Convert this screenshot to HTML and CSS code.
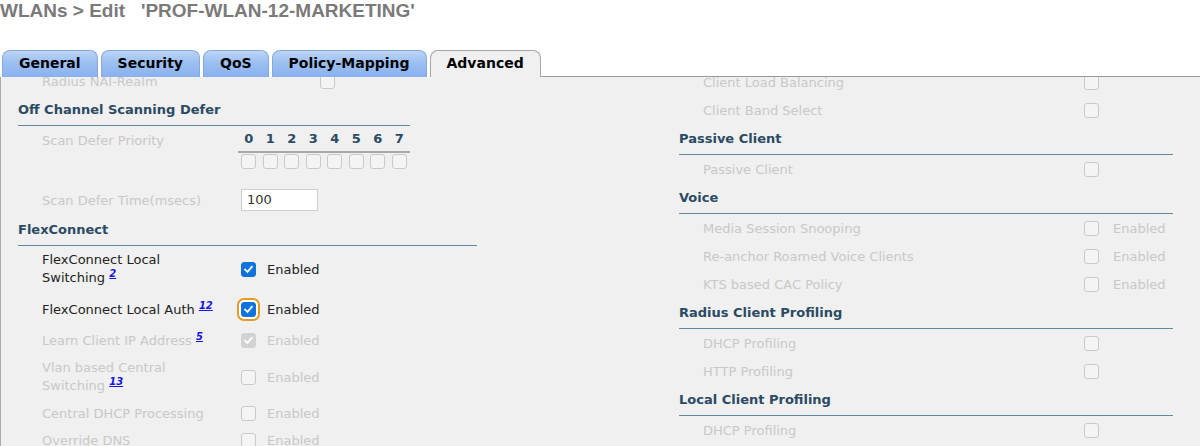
FILE: index.html
```html
<!DOCTYPE html>
<html>
<head>
<meta charset="utf-8">
<title>WLANs Edit</title>
<link rel="stylesheet" href="styles.css">
</head>
<body>
<div class="title">WLANs &gt; Edit &nbsp;&nbsp;'PROF-WLAN-12-MARKETING'</div>
<div class="tabs">
  <div class="tab">General</div>
  <div class="tab">Security</div>
  <div class="tab">QoS</div>
  <div class="tab">Policy-Mapping</div>
  <div class="tab active">Advanced</div>
  <div class="tab-fill"></div>
</div>
<div class="panel">
  <div class="col left">
    <div class="row nai"><span class="lbl dis nai-lbl">Radius NAI-Realm</span><span class="cb"></span></div>
    <div class="sec short">Off Channel Scanning Defer</div>
    <div class="prio">
      <span class="lbl dis prio-lbl">Scan Defer Priority</span>
      <div class="prio-grid">
        <div class="digits"><span>0</span><span>1</span><span>2</span><span>3</span><span>4</span><span>5</span><span>6</span><span>7</span></div>
        <div class="boxes"><span class="cell"><span class="cb"></span></span><span class="cell"><span class="cb"></span></span><span class="cell"><span class="cb"></span></span><span class="cell"><span class="cb"></span></span><span class="cell"><span class="cb"></span></span><span class="cell"><span class="cb"></span></span><span class="cell"><span class="cb"></span></span><span class="cell"><span class="cb"></span></span></div>
      </div>
    </div>
    <div class="row time"><span class="lbl dis">Scan Defer Time(msecs)</span><span class="inp">100</span></div>
    <div class="sec">FlexConnect</div>
    <div class="frow dbl"><span class="flbl">FlexConnect Local Switching <a class="fn">2</a></span><span class="cb on"><svg viewBox="0 0 15 15"><path d="M3.6 7.6 L6.3 10.3 L11.4 4.3"/></svg></span><span class="en">Enabled</span></div>
    <div class="frow la"><span class="flbl">FlexConnect Local Auth <a class="fn">12</a></span><span class="cb on focus"><svg viewBox="0 0 15 15"><path d="M3.6 7.6 L6.3 10.3 L11.4 4.3"/></svg></span><span class="en">Enabled</span></div>
    <div class="frow"><span class="flbl dis">Learn Client IP Address <a class="fn">5</a></span><span class="cb on off"><svg viewBox="0 0 15 15"><path d="M3.6 7.6 L6.3 10.3 L11.4 4.3"/></svg></span><span class="en dis">Enabled</span></div>
    <div class="frow dbl"><span class="flbl dis">Vlan based Central Switching <a class="fn">13</a></span><span class="cb"></span><span class="en dis">Enabled</span></div>
    <div class="frow"><span class="flbl dis">Central DHCP Processing</span><span class="cb"></span><span class="en dis">Enabled</span></div>
    <div class="frow"><span class="flbl dis">Override DNS</span><span class="cb"></span><span class="en dis">Enabled</span></div>
  </div>
  <div class="col right">
    <div class="rrow"><span class="rlbl dis">Client Load Balancing</span><span class="cb"></span></div>
    <div class="rrow"><span class="rlbl dis">Client Band Select</span><span class="cb"></span></div>
    <div class="sec">Passive Client</div>
    <div class="rrow"><span class="rlbl dis">Passive Client</span><span class="cb"></span></div>
    <div class="sec">Voice</div>
    <div class="rrow"><span class="rlbl dis">Media Session Snooping</span><span class="cb"></span><span class="ren dis">Enabled</span></div>
    <div class="rrow"><span class="rlbl dis">Re-anchor Roamed Voice Clients</span><span class="cb"></span><span class="ren dis">Enabled</span></div>
    <div class="rrow"><span class="rlbl dis">KTS based CAC Policy</span><span class="cb"></span><span class="ren dis">Enabled</span></div>
    <div class="sec">Radius Client Profiling</div>
    <div class="rrow"><span class="rlbl dis">DHCP Profiling</span><span class="cb"></span></div>
    <div class="rrow"><span class="rlbl dis">HTTP Profiling</span><span class="cb"></span></div>
    <div class="sec">Local Client Profiling</div>
    <div class="rrow"><span class="rlbl dis">DHCP Profiling</span><span class="cb"></span></div>
  </div>
</div>
</body>
</html>
```

FILE: styles.css
```css
* { box-sizing: border-box; }
html, body { margin: 0; padding: 0; background: #ffffff; }
body {
  width: 1200px;
  height: 446px;
  overflow: hidden;
  font-family: "DejaVu Sans", Verdana, sans-serif;
  font-size: 13px;
  color: #222222;
}

.title {
  font-family: "Liberation Sans", Arial, sans-serif;
  font-weight: bold;
  font-size: 19px;
  line-height: 22px;
  height: 22px;
  color: #7a7a7a;
  white-space: nowrap;
}

.tabs {
  display: flex;
  align-items: stretch;
  margin-top: 28px;
  height: 27px;
  padding-left: 2px;
  gap: 3px;
}
.tab {
  padding: 0 16px;
  font-weight: bold;
  font-size: 14px;
  line-height: 25px;
  color: #000000;
  border: 1px solid #86a9da;
  border-bottom: none;
  border-radius: 8px 8px 0 0;
  background: linear-gradient(#bcd5f7, #9fc1f2 40%, #88b1ee);
}
.tab.active {
  background: #f0f0f0;
  border-color: #a6a6a6;
}
.tab-fill {
  flex: 1;
  margin-left: -3px;
  border-bottom: 1px solid #9a9a9a;
}

.panel {
  display: flex;
  align-items: flex-start;
  height: 369px;
  overflow: hidden;
  background: #f0f0f0;
  border-left: 1px solid #a9a9a9;
  padding-left: 17px;
}
.col.left { width: 459px; margin-top: -10px; }
.col.right { width: 494px; margin-left: 202px; margin-top: -9px; }

.dis { color: #c8c8c8; }

.sec {
  height: 31px;
  padding-top: 7px;
  line-height: 16px;
  font-weight: bold;
  color: #2b4a63;
  border-bottom: 1px solid #5e89a3;
}
.sec.short { width: 392px; }

.row { display: flex; align-items: center; padding-left: 24px; }
.nai { height: 28px; }
.nai-lbl { width: 278px; }

.prio { display: flex; height: 59px; padding-left: 24px; }
.prio-lbl { width: 196px; padding-top: 7px; line-height: 16px; }
.prio-grid { width: 172px; padding-top: 5px; }
.digits {
  display: grid;
  grid-template-columns: repeat(8, 1fr);
  height: 22px;
  line-height: 16px;
  border-bottom: 2px solid #a8a8a8;
  font-weight: bold;
  color: #2b4a63;
  text-align: center;
}
.boxes {
  display: grid;
  grid-template-columns: repeat(8, 1fr);
  margin-top: 1px;
}
.cell { display: flex; justify-content: center; }

.time { height: 30px; }
.time .lbl { width: 199px; }
.inp {
  width: 77px;
  height: 22px;
  background: #ffffff;
  border: 1px solid #cfcfcf;
  padding-left: 5px;
  line-height: 20px;
  color: #333333;
}

.cb {
  display: inline-block;
  flex: none;
  width: 15px;
  height: 15px;
  border: 1px solid #c9c9c9;
  border-radius: 3px;
  background: #f4f4f4;
}
.cb svg { display: block; width: 13px; height: 13px; }
.cb path { fill: none; stroke: #ffffff; stroke-width: 2; stroke-linecap: square; }
.cb.on { background: #0e74dc; border-color: #0e74dc; }
.cb.on.off { background: #d2d2d2; border-color: #d2d2d2; }
.cb.focus { box-shadow: 0 0 0 2px #ffffff, 0 0 0 4px #e59a22; }

.frow { display: flex; align-items: center; height: 27px; padding-left: 24px; }
.frow.dbl { height: 46px; }
.frow.la { height: 35px; }
.flbl { width: 199px; padding-right: 20px; line-height: 18px; }
.fn {
  font-size: 10px;
  font-weight: bold;
  font-style: italic;
  color: #1414e6;
  text-decoration: underline;
  vertical-align: 5px;
  line-height: 10px;
}
.en { margin-left: 11px; }

.rrow { display: flex; align-items: center; height: 28px; padding-left: 24px; }
.rlbl { width: 381px; }
.ren { margin-left: 14px; }
```
